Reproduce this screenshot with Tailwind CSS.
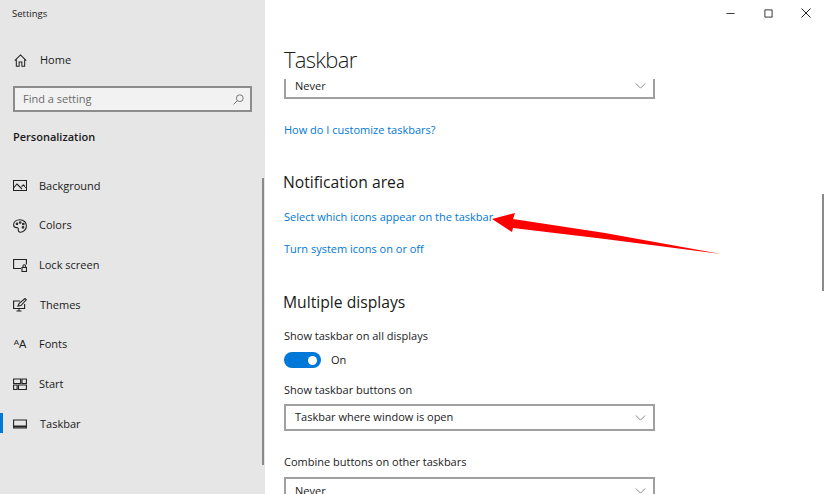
<!DOCTYPE html>
<html lang="en">

<head>
    <meta charset="UTF-8">
    <meta name="viewport" content="width=device-width, initial-scale=1.0">
    <script src="https://cdn.jsdelivr.net/npm/@tailwindcss/browser@4"></script>
    <title>Settings</title>
</head>

<body>
    <div class="relative flex h-[494px] w-[825px] overflow-hidden bg-white font-['Open_Sans',sans-serif] text-[11px] text-[#1a1a1a]">

        <!-- sidebar -->
        <div class="relative flex h-full w-[265px] shrink-0 flex-col bg-[#e6e6e6]">
            <div class="pl-3 pt-[7px] text-[9.5px] leading-[14px]">Settings</div>

            <div class="mt-[29px] flex h-5 items-center pl-[14px]">
                <svg class="w-[13px] h-[13px]" viewBox="0 0 14 14" fill="none" stroke="#222" stroke-width="1.1"><path d="M.8 7.2 7 1l6.2 6.2M2.5 5.800v7.400h3V8.500h3v4.700h3V5.800"/></svg>
                <span class="ml-[13px]">Home</span>
            </div>

            <div class="mx-[13px] mt-[16px] flex h-[26px] items-center justify-between border-2 border-[#8c8c8c] bg-[#f2f2f2] pl-2 pr-[6px] text-[#6b6b6b]">
                <span>Find a setting</span>
                <svg class="w-[11px] h-[11px]" viewBox="0 0 11 11" fill="none" stroke="#777" stroke-width="1"><circle cx="6.800" cy="4.200" r="3.400"/><path d="M4.400 6.600.6 10.400"/></svg>
            </div>

            <div class="mt-[15px] pl-[13px] font-semibold leading-5">Personalization</div>

            <div class="mt-[19px] flex flex-col">
                <div class="flex h-[39.7px] items-center pl-[13px]">
                    <svg class="w-[14px] h-[14px]" viewBox="0 0 14 14" fill="none" stroke="#222" stroke-width="1.1"><path d="M.5 1.500h13v10H.5zM.5 9l3.500-4 5 5M8.500 7.500l2-1.500 3 3"/></svg>
                    <span class="ml-[12px]">Background</span>
                </div>
                <div class="flex h-[39.7px] items-center pl-[13px]">
                    <svg class="w-[14px] h-[14px]" viewBox="0 0 14 14" fill="none" stroke="#222" stroke-width="1.1"><path d="M7 .8C3.200.8.6 3 .6 6c0 2 1.600 2.600 3 2.600 1.300 0 2 .7 1.700 1.900-.3 1.400.6 2.700 2 2.700 3.200 0 6.100-2.600 6.100-6.200C13.400 3.300 10.700.8 7 .8z"/><circle cx="4" cy="4.800" r=".8"/><circle cx="7.200" cy="3.500" r=".8"/><circle cx="10.300" cy="5" r=".8"/><circle cx="10" cy="8.300" r=".8"/></svg>
                    <span class="ml-[12px]">Colors</span>
                </div>
                <div class="flex h-[39.7px] items-center pl-[13px]">
                    <svg class="w-[14px] h-[14px]" viewBox="0 0 14 14" fill="none" stroke="#222" stroke-width="1.1"><path d="M8 10.500H.6V1.500h12.800v5"/><path d="M9 9.500h4.500v4H9zM10 9.500V8a1.200 1.200 0 0 1 2.500 0v1.500"/></svg>
                    <span class="ml-[12px]">Lock screen</span>
                </div>
                <div class="flex h-[39.7px] items-center pl-[13px]">
                    <svg class="w-[14px] h-[14px]" viewBox="0 0 14 14" fill="none" stroke="#222" stroke-width="1.1"><path d="M7 3H.6v7.500h11V6M6 10.500v2.500M3.500 13h5"/><path d="M5 8l1-2.500L12 .5l1.300 1.300L8 7.500z"/></svg>
                    <span class="ml-[13px]">Themes</span>
                </div>
                <div class="flex h-[39.7px] items-center pl-[13px]">
                    <span class="flex w-[14px] items-end justify-center font-['Liberation_Sans',sans-serif] leading-none text-[#222]"><span class="-translate-y-[3px] text-[8px]">A</span><span class="text-[11px]">A</span></span>
                    <span class="ml-[12px]">Fonts</span>
                </div>
                <div class="flex h-[39.7px] items-center pl-[13px]">
                    <svg class="w-[14px] h-[14px]" viewBox="0 0 14 14" fill="none" stroke="#222" stroke-width="1.1"><path d="M.6 2h7v4.500H.6zM9 2h4.400v4.500H9zM.6 8h3.500v4.500H.6zM5.500 8h7.900v4.500H5.500z"/></svg>
                    <span class="ml-[12px]">Start</span>
                </div>
                <div class="relative flex h-[39.7px] items-center pl-[13px]">
                    <div class="absolute left-0 top-[9px] h-5 w-[3px] bg-[#0078d7]"></div>
                    <svg class="w-[14px] h-[14px]" viewBox="0 0 14 14" fill="none" stroke="#222" stroke-width="1.1"><path d="M.6 3h12.800v8H.6z"/><path d="M.6 9.500h12.800" stroke-width="2"/></svg>
                    <span class="ml-[13px]">Taskbar</span>
                </div>
            </div>

            <div class="absolute right-[1px] top-[178px] h-[287px] w-[2px] bg-[#8a8a8a]"></div>
        </div>

        <!-- main column -->
        <div class="relative flex h-full min-w-0 flex-1 flex-col">
            <div class="flex h-[26px] items-center justify-end">
                <div class="flex w-[38px] justify-center"><svg class="w-[9px] h-[9px]" viewBox="0 0 10 10" stroke="#222" stroke-width="1"><path d="M.5 5h9"/></svg></div>
                <div class="flex w-[38px] justify-center"><svg class="w-[9px] h-[9px]" viewBox="0 0 10 10" fill="none" stroke="#222" stroke-width="1"><path d="M1 1h8v8H1z"/></svg></div>
                <div class="flex w-[38px] justify-center"><svg class="w-[10px] h-[10px]" viewBox="0 0 10 10" stroke="#222" stroke-width="1"><path d="M.5.500l9 9M9.500.500l-9 9"/></svg></div>
            </div>

            <div class="h-[53px] pl-[19px] pt-[15px] text-[22px] font-light leading-[36px] tracking-[-0.7px]">Taskbar</div>

            <div class="min-h-0 flex-1 overflow-hidden pl-[19px]">
                <div class="flex h-[20px] w-[371px] items-center justify-between border-2 border-t-0 border-[#a0a0a0] pb-1 pl-[9px] pr-[7px] leading-[14px]">
                    <span>Never</span>
                    <svg class="w-[11px] h-[6px]" viewBox="0 0 12 7" fill="none" stroke="#777" stroke-width="1"><path d="M.5.500 6 6l5.500-5.500"/></svg>
                </div>

                <div class="mt-[21px] leading-5 text-[#0078d7]">How do I customize taskbars?</div>

                <div class="mt-[30px] -ml-px text-[15.7px] leading-[24px]">Notification area</div>

                <div class="mt-[13px] leading-5 text-[#0078d7]">Select which icons appear on the taskbar</div>
                <div class="mt-[12px] leading-5 text-[#0078d7]">Turn system icons on or off</div>

                <div class="mt-[31px] -ml-px text-[15.7px] leading-[24px]">Multiple displays</div>

                <div class="mt-[12px] leading-5">Show taskbar on all displays</div>
                <div class="mt-[6px] flex h-4 items-center">
                    <div class="flex h-4 w-[37px] items-center justify-end rounded-full bg-[#0078d7] pr-1">
                        <div class="h-[9px] w-[9px] rounded-full bg-white"></div>
                    </div>
                    <span class="ml-[10px]">On</span>
                </div>

                <div class="mt-[12px] leading-5">Show taskbar buttons on</div>
                <div class="mt-[4px] flex h-[27px] w-[371px] items-center justify-between border-2 border-[#a0a0a0] pl-[9px] pr-[7px]">
                    <span>Taskbar where window is open</span>
                    <svg class="w-[11px] h-[6px]" viewBox="0 0 12 7" fill="none" stroke="#777" stroke-width="1"><path d="M.5.500 6 6l5.500-5.500"/></svg>
                </div>

                <div class="mt-[21px] leading-5">Combine buttons on other taskbars</div>
                <div class="mt-[5px] flex h-[27px] w-[371px] items-center justify-between border-2 border-[#a0a0a0] pl-[9px] pr-[7px]">
                    <span class="leading-[10px]">Never</span>
                    <svg class="w-[11px] h-[6px]" viewBox="0 0 12 7" fill="none" stroke="#777" stroke-width="1"><path d="M.5.500 6 6l5.500-5.500"/></svg>
                </div>
            </div>

            <div class="absolute right-[1px] top-[194px] h-[97px] w-[2px] bg-[#8a8a8a]"></div>
        </div>

        <!-- red annotation arrow -->
        <svg class="absolute left-0 top-0 h-[494px] w-[825px]" viewBox="0 0 825 494"><polygon fill="#fe0000" points="492,219 515,213 513,219 605,233 721,254 605,239 513,228 512,232"/></svg>
    </div>
</body>

</html>
